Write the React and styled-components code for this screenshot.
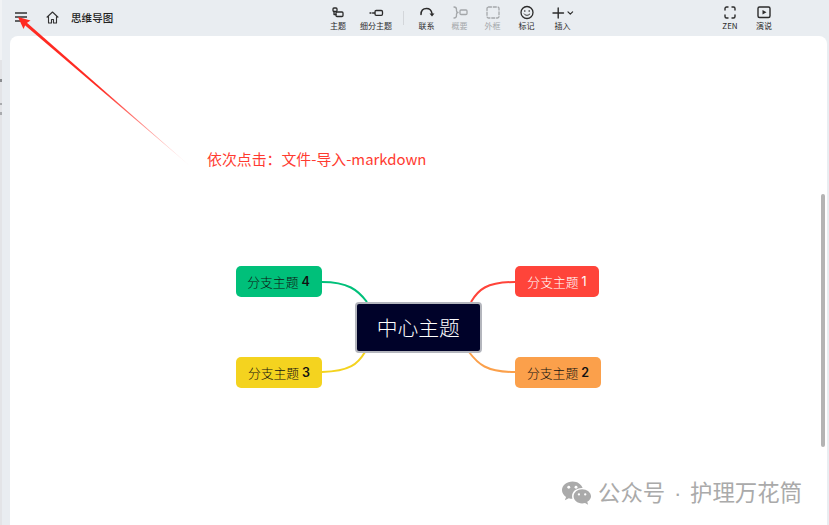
import React from "react";
import styled, { createGlobalStyle } from "styled-components";

const Global = createGlobalStyle`
  html, body {
    margin: 0;
    padding: 0;
    background: #e9edf1;
    overflow: hidden;
  }
  * { box-sizing: border-box; }
`;

const Page = styled.div`
  position: relative;
  display: flex;
  flex-direction: column;
  width: 829px;
  height: 525px;
  font-family: "Noto Sans CJK SC", "Liberation Sans", sans-serif;
`;

const LeftEdge = styled.div`
  position: absolute;
  left: 0;
  top: 0;
  width: 2px;
  height: 525px;
  background: linear-gradient(
    to bottom,
    #f1f3f5 0,
    #f1f3f5 60px,
    #e3e4e7 60px,
    #e3e4e7 79px,
    #8b8d90 79px,
    #8b8d90 82px,
    #e3e4e7 82px,
    #e3e4e7 103px,
    #a9abae 103px,
    #a9abae 105px,
    #e3e4e7 105px,
    #e3e4e7 112px,
    #a9abae 112px,
    #a9abae 115px,
    #e3e4e7 115px
  );
`;

const Toolbar = styled.div`
  display: flex;
  align-items: flex-start;
  height: 36px;
  flex: none;
`;

const LeftGroup = styled.div`
  display: flex;
  align-items: center;
  width: 321px;
  height: 34px;
  padding-left: 15px;
`;

const MiddleGroup = styled.div`
  display: flex;
  width: 392px;
  padding-top: 5px;
`;

const RightGroup = styled.div`
  display: flex;
  padding-top: 5px;
`;

const IconSlot = styled.span`
  display: flex;
  width: ${(p) => p.$w}px;
  margin-right: ${(p) => p.$mr}px;
`;

const Title = styled.span`
  font-size: 10.5px;
  font-weight: 500;
  color: #222;
  letter-spacing: 0.1px;
`;

const Tool = styled.div`
  display: flex;
  flex-direction: column;
  align-items: center;
  width: ${(p) => p.$w}px;
  color: ${(p) => (p.$off ? "#a4a7aa" : "#2b2b2b")};
`;

const ToolIcon = styled.svg`
  display: block;
  height: 15px;
  width: 24px;
`;

const ToolLabel = styled.span`
  font-size: 8px;
  line-height: 10px;
  margin-top: 1px;
  white-space: nowrap;
`;

const Divider = styled.span`
  width: 1px;
  height: 14px;
  margin: 6px 6px 0 6px;
  background: #d3d6da;
`;

const Canvas = styled.div`
  position: relative;
  flex: 1;
  margin: 0 2px 0 10px;
  background: #fff;
  border-radius: 8px 8px 0 0;
`;

const Lines = styled.svg`
  position: absolute;
  left: 0;
  top: 0;
`;

const Branch = styled.div`
  position: absolute;
  left: ${(p) => p.$x}px;
  top: ${(p) => p.$y}px;
  width: ${(p) => p.$w}px;
  height: 31px;
  padding-bottom: 1px;
  display: flex;
  align-items: center;
  justify-content: center;
  gap: 3px;
  border-radius: 5px;
  background: ${(p) => p.$bg};
  color: ${(p) => p.$fg};
  font-size: 12.8px;
  font-weight: 300;
`;

const BranchNum = styled.span`
  font-family: "Inter", "Liberation Sans", sans-serif;
  font-size: 12.5px;
  font-weight: ${(p) => (p.$light ? 400 : 600)};
`;

const CenterNode = styled.div`
  position: absolute;
  left: 344.5px;
  top: 265.5px;
  width: 127.5px;
  height: 51px;
  padding-bottom: 1px;
  display: flex;
  align-items: center;
  justify-content: center;
  background: #000229;
  border: 2px solid #b4b6bd;
  border-radius: 4px;
  color: #fff;
  font-size: 20.8px;
  font-weight: 300;
`;

const Note = styled.div`
  position: absolute;
  left: 197px;
  top: 112px;
  font-size: 14.9px;
  line-height: 22px;
  color: #ff3b30;
  white-space: nowrap;
`;

const Scrollbar = styled.div`
  position: absolute;
  left: 810.5px;
  top: 158px;
  width: 4.5px;
  height: 253px;
  border-radius: 2px;
  background: #b4b4b4;
`;

const Watermark = styled.div`
  position: absolute;
  left: 551px;
  top: 441px;
  display: flex;
  align-items: center;
  gap: 6px;
  color: #aaa;
  font-size: 22.4px;
  line-height: 28px;
  white-space: nowrap;
`;

const WatermarkDot = styled.span`
  font-family: "Liberation Sans", sans-serif;
  margin: 0 2.5px;
  white-space: pre;
`;

const Arrow = styled.svg`
  position: absolute;
  left: 0;
  top: 0;
  pointer-events: none;
`;

const stroke = {
  fill: "none",
  stroke: "currentColor",
  strokeWidth: 1.3,
  strokeLinecap: "round",
  strokeLinejoin: "round",
};

const tools = [
  {
    w: 34,
    label: "主题",
    icon: (
      <>
        <rect x="7" y="3" width="4" height="3.500" rx="1" {...stroke} />
        <rect x="10" y="7" width="7" height="4.500" rx="1" {...stroke} />
        <path d="M8 6.500v3h2" {...stroke} />
      </>
    ),
  },
  {
    w: 42,
    label: "细分主题",
    icon: (
      <>
        <rect x="11" y="5.500" width="7.500" height="4.800" rx="1.200" {...stroke} />
        <path d="M6 8h1M8.600 8h2.200" {...stroke} />
      </>
    ),
  },
  { divider: true },
  {
    w: 33,
    label: "联系",
    icon: (
      <>
        <path d="M6 9.500C6 5.500 8.500 3.500 11.500 3.500s5 2 5.500 5" {...stroke} strokeWidth="1.500" />
        <path d="M14.500 8.500h5l-2.500 3z" fill="currentColor" />
      </>
    ),
  },
  {
    w: 33,
    off: true,
    label: "概要",
    icon: (
      <>
        <path d="M6 2c2 0 2.500 1 2.500 2.500v1.500c0 .8.500 1.300 1.500 1.500-1 .2-1.500.7-1.500 1.500v1.500c0 1.500-.5 2.500-2.500 2.500" {...stroke} />
        <rect x="12" y="5" width="7" height="4.500" rx="1" {...stroke} />
      </>
    ),
  },
  {
    w: 33,
    off: true,
    label: "外框",
    icon: <rect x="6" y="2" width="12" height="11" rx="1.500" {...stroke} strokeDasharray="3 1.800" />,
  },
  {
    w: 35,
    label: "标记",
    icon: (
      <>
        <circle cx="12" cy="7.500" r="6" {...stroke} />
        <circle cx="9.800" cy="6" r=".8" fill="currentColor" />
        <circle cx="14.200" cy="6" r=".8" fill="currentColor" />
        <path d="M9.200 9c1.500 1.800 4 1.800 5.600 0" {...stroke} strokeWidth="1" />
      </>
    ),
  },
  {
    w: 37,
    label: "插入",
    icon: (
      <>
        <path d="M2 8h10.500M7.200 3v10" {...stroke} strokeWidth="1.400" />
        <path d="M17 6.800l2.300 2.300 2.300-2.300" {...stroke} strokeWidth="1.200" />
      </>
    ),
  },
];

const rightTools = [
  {
    w: 34,
    label: "ZEN",
    icon: <path d="M7 5V3.500C7 2.700 7.700 2 8.500 2H10M14 2h1.500c.8 0 1.500.7 1.500 1.500V5M17 10v1.500c0 .8-.7 1.500-1.500 1.500H14M10 13H8.500C7.700 13 7 12.300 7 11.500V10" {...stroke} strokeWidth="1.400" />,
  },
  {
    w: 34,
    label: "演说",
    icon: (
      <>
        <rect x="6" y="2" width="12" height="10.500" rx="1.500" {...stroke} strokeWidth="1.400" />
        <path d="M10.500 5l4 2.300-4 2.300z" fill="currentColor" />
      </>
    ),
  },
];

const branches = [
  { x: 505, y: 230, w: 84, bg: "#ff443a", fg: "#fff", text: "分支主题", num: 1, light: true },
  { x: 505, y: 321, w: 86, bg: "#fba04b", fg: "#111", text: "分支主题", num: 2 },
  { x: 226, y: 321, w: 86, bg: "#f4d31f", fg: "#111", text: "分支主题", num: 3 },
  { x: 225.500, y: 230, w: 86, bg: "#00c07a", fg: "#111", text: "分支主题", num: 4 },
];

function ToolButton({ tool }) {
  return (
    <Tool $w={tool.w} $off={tool.off}>
      <ToolIcon viewBox="0 0 24 15">{tool.icon}</ToolIcon>
      <ToolLabel>{tool.label}</ToolLabel>
    </Tool>
  );
}

export default function App() {
  return (
    <Page>
      <Global />
      <LeftEdge />
      <Toolbar>
        <LeftGroup>
          <IconSlot $w={12} $mr={19}>
            <svg width="12" height="10" viewBox="0 0 12 10">
              <path d="M0 1h12M0 5h12M0 9h12" stroke="#333" strokeWidth="1.400" />
            </svg>
          </IconSlot>
          <IconSlot $w={13} $mr={12}>
            <svg width="13" height="13" viewBox="0 0 13 13" fill="none" stroke="#333" strokeWidth="1.100">
              <path d="M.7 6.500L6.500 1l5.800 5.500M2.500 5.500V12h3V8.500h2V12h3V5.500" strokeLinejoin="round" />
            </svg>
          </IconSlot>
          <Title>思维导图</Title>
        </LeftGroup>
        <MiddleGroup>
          {tools.map((tool, i) =>
            tool.divider ? <Divider key={i} /> : <ToolButton key={i} tool={tool} />
          )}
        </MiddleGroup>
        <RightGroup>
          {rightTools.map((tool) => (
            <ToolButton key={tool.label} tool={tool} />
          ))}
        </RightGroup>
      </Toolbar>
      <Canvas>
        <Lines width="817" height="489" fill="none" strokeWidth="2">
          <path d="M461 266C468 254 476 246 505 246" stroke="#ff443a" />
          <path d="M459 316C468 328 476 336 505 336" stroke="#fba04b" />
          <path d="M355 316C348 328 340 335 312 336" stroke="#f4d31f" />
          <path d="M357 266C348 254 338 246 312 246" stroke="#00c07a" />
        </Lines>
        {branches.map((b) => (
          <Branch key={b.num} $x={b.x} $y={b.y} $w={b.w} $bg={b.bg} $fg={b.fg}>
            {b.text}
            <BranchNum $light={b.light}>{b.num}</BranchNum>
          </Branch>
        ))}
        <CenterNode>中心主题</CenterNode>
        <Note>依次点击：文件-导入-markdown</Note>
        <Scrollbar />
        <Watermark>
          <svg width="31" height="26" viewBox="0 0 32 26">
            <path d="M12 1C5.900 1 1 5 1 10c0 2.900 1.600 5.400 4.200 7.100L4 20.500l4-2.100c1.200.4 2.500.6 3.800.6-.3-.9-.4-1.700-.4-2.600 0-4.800 4.500-8.500 10-8.500h.9C21.200 4 17 1 12 1z" fill="#aaa" />
            <path d="M21.800 9C16.900 9 13 12.300 13 16.400s3.900 7.400 8.800 7.400c1 0 2-.2 3-.5l3.200 1.700-.9-2.900c2.400-1.300 3.900-3.400 3.900-5.700C31 12.300 26.700 9 21.800 9z" fill="#aaa" />
            <circle cx="8" cy="7" r="1.500" fill="#fff" />
            <circle cx="15.500" cy="7" r="1.500" fill="#fff" />
            <circle cx="18.500" cy="14.500" r="1.200" fill="#fff" />
            <circle cx="25" cy="14.500" r="1.200" fill="#fff" />
          </svg>
          <span>
            公众号<WatermarkDot> · </WatermarkDot>护理万花筒
          </span>
        </Watermark>
      </Canvas>
      <Arrow width="829" height="525" viewBox="0 0 829 525">
        <defs>
          <linearGradient id="tail" x1="190" y1="166" x2="100" y2="84" gradientUnits="userSpaceOnUse">
            <stop offset="0" stopColor="#ff2a22" stopOpacity="0.1" />
            <stop offset="1" stopColor="#ff2a22" />
          </linearGradient>
        </defs>
        <path d="M190 166L25.500 21.500 23.500 24z" fill="url(#tail)" />
        <path d="M18 17L30.500 20.500 26 23.500 23.500 29z" fill="#ff2a22" />
      </Arrow>
    </Page>
  );
}
